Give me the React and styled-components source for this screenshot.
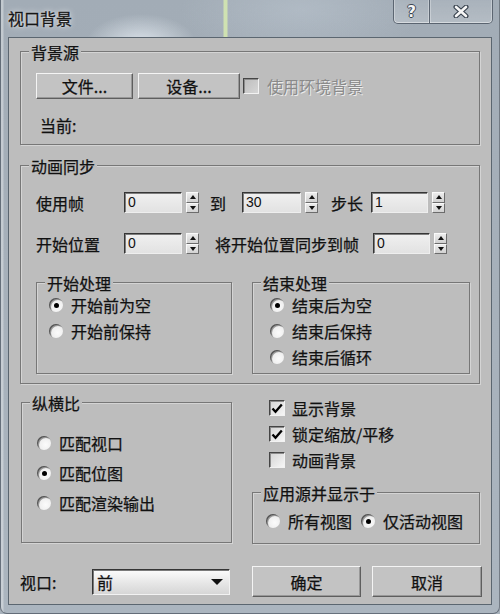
import React from 'react';
import styled, { createGlobalStyle } from 'styled-components';

const UI = `"Noto Sans CJK SC", "Noto Sans", sans-serif`;
const PANEL = '#bdbdbd';

const GlobalStyle = createGlobalStyle`
  html, body { margin: 0; padding: 0; background: #a8b2bc; }
  body { font-family: ${UI}; }
`;

const Window = styled.div`
  width: 500px;
  height: 614px;
  box-sizing: border-box;
  padding: 0 7px 8px;
  display: flex;
  flex-direction: column;
  border: 1px solid rgba(48, 58, 70, 0.55);
  border-top: none;
  border-radius: 0 0 7px 7px;
  background:
    linear-gradient(to right, transparent 222px, rgba(214, 234, 176, 0.85) 223px, rgba(214, 234, 176, 0.85) 226px, transparent 227px) 0 0 / 100% 37px no-repeat,
    radial-gradient(ellipse 55px 30px at 140px 44px, rgba(226, 233, 240, 0.9), rgba(226, 233, 240, 0) 100%),
    radial-gradient(ellipse 120px 50px at 300px 10px, rgba(190, 200, 210, 0.5), rgba(190, 200, 210, 0) 100%),
    linear-gradient(to right, rgba(255, 255, 255, 0.35) 0 2px, transparent 3px),
    linear-gradient(180deg, #a2acb6, #abb5bf);
`;

const TitleBar = styled.div`
  height: 37px;
  display: flex;
  align-items: flex-start;
`;

const TitleText = styled.div`
  margin-top: 8px;
  font-size: 16px;
  line-height: 20px;
  color: #161616;
  -webkit-text-stroke: 0.3px #161616;
  text-shadow: 0 0 6px rgba(255, 255, 255, 0.9), 0 0 2px rgba(255, 255, 255, 0.8);
`;

const CaptionGroup = styled.div`
  margin-left: auto;
  margin-right: -1px;
  display: flex;
  height: 24px;
`;

const CaptionButton = styled.div`
  width: ${p => p.$w}px;
  height: 24px;
  box-sizing: border-box;
  display: flex;
  align-items: center;
  justify-content: center;
  border: 1px solid rgba(58, 68, 80, 0.7);
  border-top: none;
  border-left: ${p => (p.$last ? 'none' : '1px solid rgba(58, 68, 80, 0.7)')};
  border-radius: ${p => (p.$last ? '0 0 5px 0' : '0 0 0 5px')};
  background: linear-gradient(rgba(255, 255, 255, 0.08), rgba(255, 255, 255, 0.2));
  box-shadow: inset 0 -1px 0 rgba(255, 255, 255, 0.45), inset 1px 0 0 rgba(255, 255, 255, 0.3),
    inset -1px 0 0 rgba(255, 255, 255, 0.3);
`;

const HelpGlyph = styled.span`
  font-family: "DejaVu Sans", sans-serif;
  font-weight: bold;
  font-size: 15px;
  line-height: 16px;
  color: #f6f6f6;
  text-shadow: 1px 0 0 #3a4450, -1px 0 0 #3a4450, 0 1px 0 #3a4450, 0 -1px 0 #3a4450;
`;

const Client = styled.div`
  flex: 1;
  box-sizing: border-box;
  background: ${PANEL};
  border: 1px solid #5b6670;
  padding: 13px 11px 0;
  display: flex;
  flex-direction: column;
`;

const Group = styled.div`
  position: relative;
  box-sizing: border-box;
  height: ${p => p.$h}px;
  width: ${p => (p.$w ? `${p.$w}px` : 'auto')};
  margin: ${p => p.$m || '0'};
  padding: ${p => p.$pad || '0'};
  border: 1px solid #777;
  box-shadow: 1px 1px 0 #d4d4d4, inset 1px 1px 0 #d4d4d4;
`;

const GroupTitle = styled.span`
  position: absolute;
  top: -9px;
  left: 8px;
  padding: 0 2px;
  background: ${PANEL};
  font-size: 16px;
  line-height: 18px;
  color: #111;
  -webkit-text-stroke: 0.25px #111;
`;

const Row = styled.div`
  display: flex;
  align-items: center;
  height: ${p => p.$h}px;
  margin-top: ${p => p.$mt || 0}px;
  padding-left: ${p => p.$pl || 0}px;
`;

const Text = styled.span`
  flex: none;
  font-size: 16px;
  line-height: 18px;
  color: ${p => (p.$disabled ? '#8a8a8a' : '#111')};
  -webkit-text-stroke: ${p => (p.$disabled ? '0' : '0.25px #111')};
  text-shadow: ${p => (p.$disabled ? '1px 1px 0 #ececec' : 'none')};
  width: ${p => (p.$w ? `${p.$w}px` : 'auto')};
  margin-left: ${p => p.$ml || 0}px;
  white-space: nowrap;
`;

const PushButton = styled.div`
  flex: none;
  box-sizing: border-box;
  width: ${p => p.$w}px;
  height: ${p => p.$h}px;
  margin-left: ${p => p.$ml || 0}px;
  display: flex;
  align-items: center;
  justify-content: center;
  background: #c3c3c3;
  border: 1px solid;
  border-color: #f4f4f4 #5e5e5e #5e5e5e #f4f4f4;
  box-shadow: inset -1px -1px 0 #989898;
  font-size: 16px;
  color: #111;
  -webkit-text-stroke: 0.25px #111;
`;

const Field = styled.div`
  flex: none;
  box-sizing: border-box;
  width: ${p => p.$w}px;
  height: 21px;
  padding-left: 3px;
  border: 1px solid;
  border-color: #353535 #eeeeee #eeeeee #353535;
  box-shadow: inset 1px 1px 0 #7e7e7e;
  background: linear-gradient(#f0f0f0, #e2e2e2);
  font-family: "Liberation Sans", Arial, sans-serif;
  font-size: 14px;
  line-height: 18px;
  color: #111;
`;

const SpinBox = styled.div`
  flex: none;
  width: 13px;
  height: 21px;
  margin-left: 4px;
  display: flex;
  flex-direction: column;
`;

const SpinHalf = styled.div`
  flex: 1;
  box-sizing: border-box;
  display: flex;
  align-items: center;
  justify-content: center;
  background: linear-gradient(#ececec, #d2d2d2);
  border: 1px solid;
  border-color: #fafafa #6c6c6c #6c6c6c #fafafa;
  &::after {
    content: '';
    border-left: 3.5px solid transparent;
    border-right: 3.5px solid transparent;
    ${p => (p.$up ? 'border-bottom: 4px solid #111;' : 'border-top: 4px solid #111;')}
  }
`;

const CheckBox = styled.div`
  flex: none;
  box-sizing: border-box;
  width: 16px;
  height: 16px;
  margin-left: ${p => p.$ml || 0}px;
  margin-right: ${p => p.$mr || 7}px;
  border: 1px solid;
  border-color: #454545 #f2f2f2 #f2f2f2 #454545;
  box-shadow: inset 1px 1px 0 #8c8c8c;
  background: ${p => (p.$disabled ? 'linear-gradient(135deg, #bdbdbd, #d6d6d6)' : 'linear-gradient(135deg, #d4d4d4, #f6f6f6)')};
  display: flex;
  align-items: center;
  justify-content: center;
`;

const RadioDot = styled.div`
  flex: none;
  position: relative;
  width: 14px;
  height: 14px;
  margin-left: ${p => p.$ml || 0}px;
  margin-right: 8px;
  border-radius: 50%;
  background: radial-gradient(circle at 62% 62%, #fbfbfb 0, #f0f0f0 45%, #cfcfcf 100%);
  box-shadow: inset 1px 1px 0 #555, inset 2px 2px 0 #9a9a9a;
  &::after {
    content: '';
    display: ${p => (p.$on ? 'block' : 'none')};
    position: absolute;
    left: 4.5px;
    top: 4.5px;
    width: 5px;
    height: 5px;
    border-radius: 50%;
    background: #000;
  }
`;

const SubGroups = styled.div`
  display: flex;
  gap: 20px;
  margin-top: 28px;
`;

const Bottom = styled.div`
  display: grid;
  grid-template-columns: 212px 228px;
  column-gap: 20px;
  align-items: start;
  margin-top: 11px;
`;

const Column = styled.div`
  display: flex;
  flex-direction: column;
`;

const Footer = styled.div`
  display: flex;
  align-items: center;
  height: 31px;
  margin-top: 22px;
`;

const Dropdown = styled.div`
  flex: none;
  box-sizing: border-box;
  width: 138px;
  height: 26px;
  display: flex;
  align-items: center;
  padding: 0 6px 0 4px;
  border: 1px solid;
  border-color: #353535 #f2f2f2 #f2f2f2 #353535;
  box-shadow: inset 1px 1px 0 #7a7a7a;
  background: linear-gradient(#fcfcfc, #e6e6e6 55%, #d6d6d6);
  font-size: 16px;
  color: #111;
  -webkit-text-stroke: 0.25px #111;
  &::after {
    content: '';
    margin-left: auto;
    border-left: 6px solid transparent;
    border-right: 6px solid transparent;
    border-top: 6px solid #111;
  }
`;

function Spinner({ value, w = 58 }) {
  return (
    <>
      <Field $w={w}>{value}</Field>
      <SpinBox>
        <SpinHalf $up />
        <SpinHalf />
      </SpinBox>
    </>
  );
}

function Check({ label, checked, disabled, ml }) {
  return (
    <>
      <CheckBox $disabled={disabled} $ml={ml} $mr={disabled ? 8 : 7}>
        {checked && (
          <svg width="12" height="11" viewBox="0 0 12 11">
            <path d="M1.5 5.5 L4.5 8.8 L10.8 1.5" fill="none" stroke="#000" strokeWidth="2.3" />
          </svg>
        )}
      </CheckBox>
      <Text $disabled={disabled}>{label}</Text>
    </>
  );
}

function Radio({ label, on, ml }) {
  return (
    <>
      <RadioDot $on={on} $ml={ml} />
      <Text>{label}</Text>
    </>
  );
}

const startOptions = [
  { label: '开始前为空', on: true },
  { label: '开始前保持', on: false },
];

const endOptions = [
  { label: '结束后为空', on: true },
  { label: '结束后保持', on: false },
  { label: '结束后循环', on: false },
];

const aspectOptions = [
  { label: '匹配视口', on: false },
  { label: '匹配位图', on: true },
  { label: '匹配渲染输出', on: false },
];

const displayChecks = [
  { label: '显示背景', checked: true },
  { label: '锁定缩放/平移', checked: true },
  { label: '动画背景', checked: false },
];

export default function App() {
  return (
    <>
      <GlobalStyle />
      <Window>
        <TitleBar>
          <TitleText>视口背景</TitleText>
          <CaptionGroup>
            <CaptionButton $w={37}>
              <HelpGlyph>?</HelpGlyph>
            </CaptionButton>
            <CaptionButton $w={63} $last>
              <svg width="16" height="13" viewBox="0 0 16 13">
                <path d="M3 2 L13 11 M13 2 L3 11" stroke="#3a4450" strokeWidth="5" strokeLinecap="round" />
                <path d="M3 2 L13 11 M13 2 L3 11" stroke="#f6f6f6" strokeWidth="2.6" strokeLinecap="round" />
              </svg>
            </CaptionButton>
          </CaptionGroup>
        </TitleBar>

        <Client>
          <Group $h={94} $pad="21px 0 0 15px">
            <GroupTitle>背景源</GroupTitle>
            <Row $h={26}>
              <PushButton $w={97} $h={26}>文件...</PushButton>
              <PushButton $w={102} $h={26} $ml={5}>设备...</PushButton>
              <Check label="使用环境背景" disabled ml={3} />
            </Row>
            <Row $h={18} $mt={17} $pl={4}>
              <Text>当前:</Text>
            </Row>
          </Group>

          <Group $h={219} $m="20px 0 0 0" $pad="26px 0 0 15px">
            <GroupTitle>动画同步</GroupTitle>
            <Row $h={21}>
              <Text $w={88}>使用帧</Text>
              <Spinner value="0" />
              <Text $w={32} $ml={11}>到</Text>
              <Spinner value="30" w={59} />
              <Text $w={40} $ml={13}>步长</Text>
              <Spinner value="1" w={57} />
            </Row>
            <Row $h={21} $mt={20}>
              <Text $w={88}>开始位置</Text>
              <Spinner value="0" />
              <Text $w={158} $ml={16}>将开始位置同步到帧</Text>
              <Spinner value="0" w={57} />
            </Row>
            <SubGroups>
              <Group $w={196} $h={92} $pad="9px 0 0 12px">
                <GroupTitle>开始处理</GroupTitle>
                {startOptions.map(o => (
                  <Row $h={26} key={o.label}>
                    <Radio label={o.label} on={o.on} />
                  </Row>
                ))}
              </Group>
              <Group $w={218} $h={92} $pad="9px 0 0 17px">
                <GroupTitle>结束处理</GroupTitle>
                {endOptions.map(o => (
                  <Row $h={26} key={o.label}>
                    <Radio label={o.label} on={o.on} />
                  </Row>
                ))}
              </Group>
            </SubGroups>
          </Group>

          <Bottom>
            <Group $h={141} $m="7px 0 0 1px" $pad="25px 0 0 15px">
              <GroupTitle>纵横比</GroupTitle>
              {aspectOptions.map(o => (
                <Row $h={30} key={o.label}>
                  <Radio label={o.label} on={o.on} />
                </Row>
              ))}
            </Group>
            <Column>
              {displayChecks.map(c => (
                <Row $h={26} $pl={17} key={c.label}>
                  <Check label={c.label} checked={c.checked} />
                </Row>
              ))}
              <Group $h={52} $m="19px 0 0 0" $pad="18px 0 0 13px">
                <GroupTitle>应用源并显示于</GroupTitle>
                <Row $h={20}>
                  <Radio label="所有视图" />
                  <Radio label="仅活动视图" on ml={9} />
                </Row>
              </Group>
            </Column>
          </Bottom>

          <Footer>
            <Text $w={72}>视口:</Text>
            <Dropdown>前</Dropdown>
            <PushButton $w={109} $h={31} $ml={22}>确定</PushButton>
            <PushButton $w={110} $h={31} $ml={11}>取消</PushButton>
          </Footer>
        </Client>
      </Window>
    </>
  );
}
